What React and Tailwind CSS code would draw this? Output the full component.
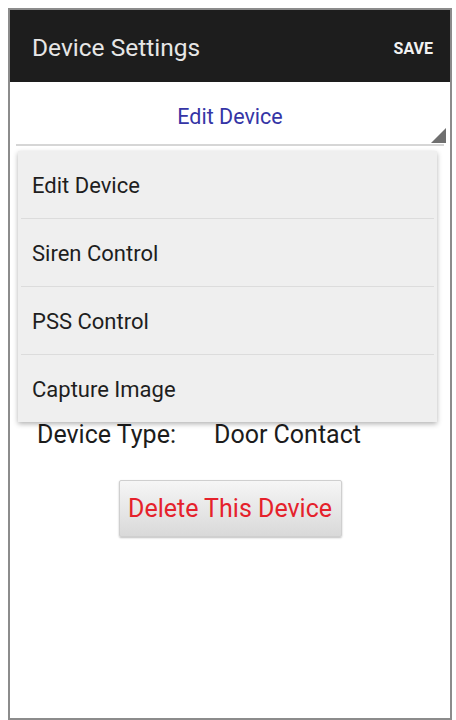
import React from "react";

const menuItems = ["Edit Device", "Siren Control", "PSS Control", "Capture Image"];

export default function App() {
    return (
        <div
            className="w-[456px] h-[720px] bg-white pt-[8px] overflow-hidden"
            style={{ fontFamily: "Roboto, 'Noto Sans', sans-serif" }}
        >
            {/* Phone frame */}
            <div className="relative ml-[8px] w-[444px] h-[712px] border-2 border-[#8c8c8c] bg-white">

                {/* Action bar */}
                <div className="h-[72px] bg-[#1d1d1d] flex items-center justify-between pl-[22px] pr-[17px] pt-[5px]">
                    <span className="text-[24.5px] text-[#e6e6e6]">
                        Device Settings
                    </span>
                    <span className="text-[16px] font-bold text-[#f2f2f2]">
                        SAVE
                    </span>
                </div>

                {/* Spinner */}
                <div className="relative mx-[6px] h-[64px] pt-[8px] flex items-center justify-center border-b-2 border-[#d6d6d6]">
                    <span className="text-[21.5px] text-[#3535a6]">Edit Device</span>
                    <svg
                        className="absolute right-[-2px] bottom-[1px]"
                        width="15"
                        height="15"
                        viewBox="0 0 15 15"
                    >
                        <polygon points="15,0 15,15 0,15" fill="#6f6f6f" />
                    </svg>
                </div>

                {/* Details */}
                <div className="pt-[274px] pl-[27px] flex text-[25px] leading-[30px] text-[#1c1c1c]">
                    <span className="w-[177px]">Device Type:</span>
                    <span>Door Contact</span>
                </div>

                <div className="mt-[30px] flex justify-center">
                    <button className="w-[223px] h-[57px] rounded-[2px] border border-[#cfcfcf] bg-gradient-to-b from-[#f6f6f6] to-[#d9d9d9] shadow-[0_1px_2px_rgba(0,0,0,0.25)] text-[25px] text-[#e5212b]">
                        Delete This Device
                    </button>
                </div>

                {/* Dropdown menu */}
                <div className="absolute left-[8px] top-[141px] w-[419px] bg-[#efefef] shadow-[0_2px_5px_rgba(0,0,0,0.3)]">
                    {menuItems.map((item, index) => (
                        <div key={item}>
                            {index > 0 && (
                                <div className="mx-[3px] h-px bg-[#dcdcdc]" />
                            )}
                            <div className="h-[67px] flex items-center pl-[14px] pt-[1px] text-[22px] text-[#1e1e1e]">
                                {item}
                            </div>
                        </div>
                    ))}
                </div>
            </div>
        </div>
    );
}
